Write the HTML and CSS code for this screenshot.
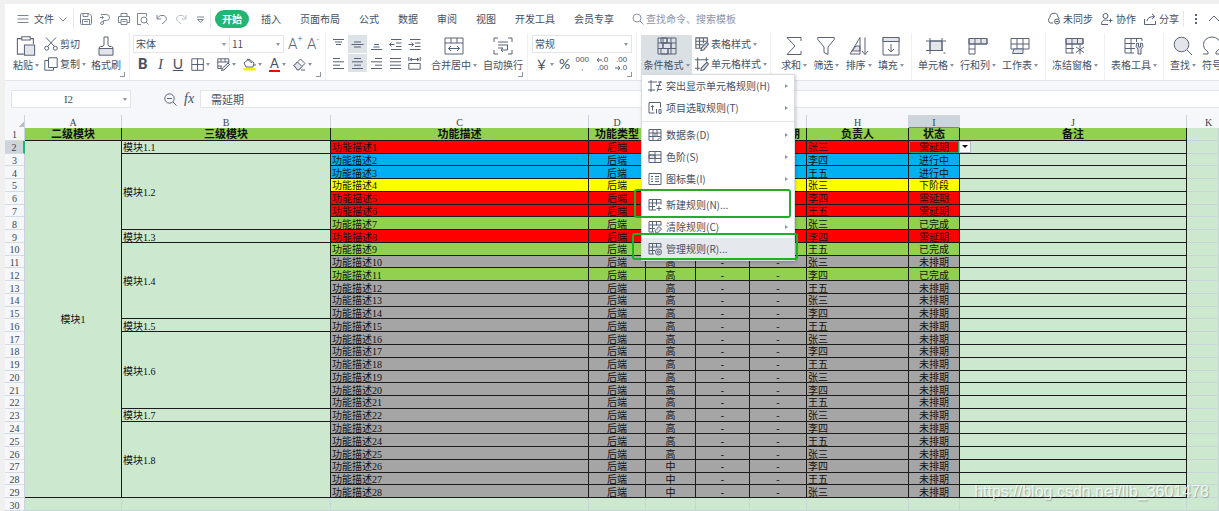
FILE: index.html
```html
<!DOCTYPE html>
<html lang="zh-CN">
<head>
<meta charset="utf-8">
<title>表格</title>
<link rel="stylesheet" href="styles.css">
</head>
<body>
<svg class="defs" aria-hidden="true">
  <symbol id="save" viewBox="0 0 12 12"><path d="M.5 1.5q0-1 1-1h7.500l2.500 2.500v7.500q0 1-1 1h-9q-1 0-1-1zM3 .5v3h5v-3M2.500 11.500v-5h7v5M4 8.500h4"/></symbol>
  <symbol id="export" viewBox="0 0 12 12"><path d="M2 1.500h5.500a3 3 0 0 1 0 6H4.500v2.500a1.500 1.500 0 0 1-3 0q0-1.500 3-1.500M4.500 4.500H1M4.500 4.500L2.800 3M4.500 4.500L2.800 6"/></symbol>
  <symbol id="print" viewBox="0 0 12 12"><path d="M3 3.500v-3h6v3M3 9.500H.5v-6h11v6H9M3 6.500h6v5H3zM4.500 8.500h3"/></symbol>
  <symbol id="preview" viewBox="0 0 12 12"><path d="M4 11.500H.5V.5h9v3M11.500 11.500L9 9"/><circle cx="7" cy="7" r="3"/></symbol>
  <symbol id="undo" viewBox="0 0 12 12"><path d="M1 2v4h4M1 5.500Q4 1 8 2.500Q12.500 5.500 9 8.500L6 11"/></symbol>
  <symbol id="redo" viewBox="0 0 12 12"><path d="M11 2v4H7M11 5.500Q8 1 4 2.500Q-.5 5.500 3 8.500L6 11"/></symbol>
  <symbol id="search" viewBox="0 0 12 12"><circle cx="5" cy="5" r="4"/><path d="M8 8l3.500 3.500"/></symbol>
  <symbol id="down" viewBox="0 0 8 8"><path d="M.5 2.500L4 6l3.500-3.500"/></symbol>
  <symbol id="cloud" viewBox="0 0 13 12"><path d="M6 10.500H3.500a3 3 0 0 1-.5-5.500a4 4 0 0 1 8-.5a2.500 2.500 0 0 1 1 2"/><circle cx="10" cy="9" r="2.500"/><path d="M8.500 9h3"/></symbol>
  <symbol id="person" viewBox="0 0 12 12"><circle cx="4.500" cy="3" r="2.500"/><path d="M7 11.500H.5Q.5 7 4.500 7q1.500 0 2.500.5M9.500 5.500v4M7.500 7.500h4"/></symbol>
  <symbol id="share" viewBox="0 0 12 12"><path d="M.5 6v5.500h11V8M3 8Q3.500 3.500 10.500 3.500M8 .8l2.800 2.700L8 6"/></symbol>

  <symbol id="paste" viewBox="0 0 18 19"><path d="M5 2.500H.8v14.700h6M13 2.500h3v5"/><path d="M5 .8h8v3H5z"/><path class="soft" d="M7.500 8.500h9.700v9.700H7.500z"/></symbol>
  <symbol id="cut" viewBox="0 0 14 14"><path d="M2 .5l8.500 9M12 .5L3.500 9.500"/><circle cx="2.700" cy="11.200" r="2"/><circle cx="11.300" cy="11.200" r="2"/></symbol>
  <symbol id="copy" viewBox="0 0 14 14"><path d="M4.500.8h8.700v9.700H4.500zM4.500 3.500H.8v9.700h8.700v-2.700"/></symbol>
  <symbol id="brush" viewBox="0 0 16 20"><path d="M6 1h4v7.500q0 2 2 2h1.500q1.500 0 1.500 2H1q0-2 1.500-2H4q2 0 2-2z"/><path class="soft" d="M1 12.500h14v6.700H1z"/></symbol>
  <symbol id="grid" viewBox="0 0 13 13"><path d="M.8.8h11.500v11.500H.8zM6.500.8v11.500M.8 6.500h11.500"/></symbol>
  <symbol id="gridpen" viewBox="0 0 13 13"><path d="M4.500 10.500H.8V.8h11v4.500M.8 4h11M4 .8v3M8 .8v3M1 8h4M4 8v3"/><path class="soft" d="M11 5l1.500 1.500L7 12l-2.500.5L5.500 10z"/></symbol>
  <symbol id="fill" viewBox="0 0 13 13"><path d="M1 5l5-4 5 4-1 4H3zM4 1l5 4M12 6v2"/><path class="yellow" d="M.5 10h12v2.500H.5z"/></symbol>
  <symbol id="eraser" viewBox="0 0 13 13"><path d="M1 7.500l6.500-6.500 4.500 4.500L5.500 12h-1z"/><path class="soft" d="M1 7.500l3.500-3.500L9 8.500 5.500 12h-1z"/><path d="M8 12h4"/></symbol>
  <symbol id="a-top" viewBox="0 0 13 13"><path d="M1 1.500h11M3 4h7M4 6.500h5"/></symbol>
  <symbol id="a-mid" viewBox="0 0 13 13"><path d="M3 4h7M.5 6.500h12M3 9h7"/></symbol>
  <symbol id="a-bot" viewBox="0 0 13 13"><path d="M4 6.500h5M3.500 9h6M1 11.500h11"/></symbol>
  <symbol id="outdent" viewBox="0 0 13 13"><path d="M2 1.500h10.500M7 5h5.500M7 8.500h5.500M2 11.500h10.500M5.500 6.500h-5M2.500 4.500l-2 2 2 2"/></symbol>
  <symbol id="indent" viewBox="0 0 13 13"><path d="M2 1.500h10.500M7 5h5.500M7 8.500h5.500M2 11.500h10.500M.5 6.500h5M3.500 4.500l2 2-2 2"/></symbol>
  <symbol id="a-left" viewBox="0 0 13 13"><path d="M1 1.500h7M1 4.800h11M1 8.200h7M1 11.500h11"/></symbol>
  <symbol id="a-center" viewBox="0 0 13 13"><path d="M3 1.500h7M1 4.800h11M3 8.200h7M1 11.500h11"/></symbol>
  <symbol id="a-right" viewBox="0 0 13 13"><path d="M5 1.500h7M1 4.800h11M5 8.200h7M1 11.500h11"/></symbol>
  <symbol id="a-just" viewBox="0 0 13 13"><path d="M1 1.500h11M1 4.800h11M1 8.200h11M1 11.500h11"/></symbol>
  <symbol id="a-dist" viewBox="0 0 13 13"><path d="M.8 0v4M12.200 0v4M2 2.500h9M4 1L2 2.500 4 4M9 1l2 1.500L9 4M.8 6.500h11.400v5.700H.8z"/></symbol>
  <symbol id="merge" viewBox="0 0 20 18"><path d="M1 1h18v16H1zM1 6h18M7 1v5M13 1v5M4.500 11.500h11M7 9l-2.500 2.500L7 14M13 9l2.500 2.500L13 14"/></symbol>
  <symbol id="wrap" viewBox="0 0 20 18"><path d="M5 1H1v4M15 1h4v4M5 17H1v-4M15 17h4v-4M5 5h10M5 8h10M5 11h5M14.500 8v5H8M10 11l-2 2 2 2"/></symbol>
  <symbol id="cond" viewBox="0 0 20 18"><path class="soft" d="M4 1h6v5H4zM6 6h8v5.500H6zM4 11.500h7V17H4z"/><path d="M1 1h18v16H1zM1 6h18M1 11.500h18M6 1v5M10 1v5M14 1v16M6 6v5.500M11 11.500V17"/></symbol>
  <symbol id="tstyle" viewBox="0 0 13 13"><path d="M6 10.500H.8V.8h10.700v4M.8 4h10M.8 7.200h7M4.200.8v9.700M7.800.8v5"/><path class="soft" d="M11 5l1.500 1.500L8 12l-2.500.5.5-2.500z"/></symbol>
  <symbol id="cstyle" viewBox="0 0 13 13"><path d="M0 2.500h12.500M2.500.5v12M0 10.500h5M10.500.5v4"/><path class="soft" d="M11 5l1.500 1.500L8 12l-2.500.5.5-2.500z"/></symbol>
  <symbol id="sum" viewBox="0 0 18 20"><path d="M16 5V1.500H2L10 10 2 18.500h14V15"/></symbol>
  <symbol id="filter" viewBox="0 0 18 20"><path d="M.8 1.500h16.400v2L11 11v7.500l-4-2V11L.8 3.500z"/></symbol>
  <symbol id="sort" viewBox="0 0 20 20"><path class="soft" d="M3 15l4-5h4v5z"/><path d="M1 18L11 1.500V18zM16 1.500v17M13 15l3 3.500 3-3.500"/></symbol>
  <symbol id="filldown" viewBox="0 0 18 20"><path d="M1 1.500h16v17.500H1z"/><path class="soft" d="M1 1.500h16v4H1z"/><path d="M9 8v8M6 13l3 3 3-3"/></symbol>
  <symbol id="cell" viewBox="0 0 20 18"><path class="soft" d="M4 4h12v9.500H4z"/><path d="M0 4h20M0 13.500h17M4 1v16M16 1v13M17.500 16h2"/></symbol>
  <symbol id="rowcol" viewBox="0 0 20 18"><path class="soft" d="M1 1.500h18V7H1z"/><path d="M1 1.500h6V17H1zM1 7h18V1.500M1 12h6M13 1.500V7"/></symbol>
  <symbol id="sheet" viewBox="0 0 20 18"><path d="M1 1.500h18V12H1zM1 7h18M7 1.500V12M13 1.500V12"/><path class="soft" d="M4 12h9v4.500H2.500z"/></symbol>
  <symbol id="freeze" viewBox="0 0 20 18"><path class="soft" d="M1 1.500h17V7H1z"/><path d="M9 16H1V1.500h17V7M1 7h17M1 11.500h8M7 1.500V16M12.500 1.500V7M15 8v9.500M11 10l8 5.500M19 10l-8 5.500"/></symbol>
  <symbol id="tools" viewBox="0 0 20 18"><path d="M10 16H1V1.500h17V4M1 6.500h10M1 11.500h10M7 1.500V16M12.500 1.500V5"/><path class="soft" d="M14 17v-5q-3-2-1.500-5.500L14.500 6v4h2V6l2 .5Q20 10 17 12v5z"/></symbol>
  <symbol id="find" viewBox="0 0 20 20"><circle class="soft" cx="8.500" cy="8.500" r="7.300"/><path d="M14 14l5 5"/></symbol>
  <symbol id="omega" viewBox="0 0 20 20"><path d="M1 18h5v-2Q1 13 1.500 8.500A8.500 7.500 0 0 1 18.500 8.500Q19 13 14 16v2h5"/></symbol>
  <symbol id="zoomout" viewBox="0 0 13 13"><circle cx="5.500" cy="5.500" r="4.700"/><path d="M9 9l3.500 3.500M3 5.500h5"/></symbol>
  <symbol id="arr-l" viewBox="0 0 6 6"><path d="M6 3H1M3 1L1 3l2 2"/></symbol>
  <symbol id="arr-r" viewBox="0 0 6 6"><path d="M0 3h5M3 1l2 2-2 2"/></symbol>

  <symbol id="m-hl" viewBox="0 0 14 13"><path d="M0 2.500h9M3 .5v12M0 10.500h7M8 6h5M10 10h4M12.500 1.500L9 12M10 2.500h4"/></symbol>
  <symbol id="m-top" viewBox="0 0 14 13"><path d="M6.500 11.500H1V1h11.500v5M4.500 9V4M3 5.500L4.500 4 6 5.500M8.500 7.500V12M11 8h2v4h-2z"/></symbol>
  <symbol id="m-bar" viewBox="0 0 14 13"><path d="M1 1h12v11H1zM1 4.500h12M1 8h12M5 1v11M9 1v7M7 4.500v3.500M9 12l3-3"/></symbol>
  <symbol id="m-scale" viewBox="0 0 14 13"><path class="soft" d="M1 4.500h6V8H1z"/><path d="M1 1h12v11H1zM1 4.500h12M1 8h12M7 1v11"/></symbol>
  <symbol id="m-icons" viewBox="0 0 14 13"><path d="M1 1h12v11H1zM3 4h2M3 6.500h2M3 9h2M7 4h4M7 6.500h4M7 9h4"/></symbol>
  <symbol id="m-new" viewBox="0 0 14 13"><path d="M8 11.500H1V1h12v5M1 4.500h12M4.500 1v10.500M1 8h6M8.500 1v6M11 7.500v5M8.500 10h5"/></symbol>
  <symbol id="m-clear" viewBox="0 0 14 13"><path d="M6 11.500H1V1h12v4M1 4.500h12M4.500 1v10.500M1 8h6M8.500 1v4"/><path class="soft" d="M7 10l4-4 2.500 2.500-4 4H8z"/></symbol>
  <symbol id="m-manage" viewBox="0 0 14 13"><path d="M6 11.500H1V1h12v4M1 4.500h12M4.500 1v10.500M1 8h6M8.500 1v4"/><circle class="soft" cx="10.500" cy="9.500" r="3"/><circle cx="10.500" cy="9.500" r="1"/></symbol>
</svg>

<div class="app">
  <header class="tabs">
    <button class="file"><svg class="i12" viewBox="0 0 12 12"><path d="M.5 2.500h11M.5 6h11M.5 9.500h11"/></svg><span>文件</span><svg class="i8"><use href="#down"/></svg></button>
    <div class="quick">
      <button aria-label="保存"><svg class="i12"><use href="#save"/></svg></button>
      <button aria-label="输出"><svg class="i12"><use href="#export"/></svg></button>
      <button aria-label="打印"><svg class="i12"><use href="#print"/></svg></button>
      <button aria-label="预览"><svg class="i12"><use href="#preview"/></svg></button>
      <button aria-label="撤销"><svg class="i12"><use href="#undo"/></svg></button>
      <button aria-label="恢复" class="faded"><svg class="i12"><use href="#redo"/></svg></button>
      <button aria-label="更多"><svg class="i12" viewBox="0 0 12 12"><path d="M3 4h7M3.500 6.500h6L6.500 9z"/></svg></button>
    </div>
    <nav class="nav">
      <a class="on" href="#start">开始</a><a href="#insert">插入</a><a href="#layout">页面布局</a><a href="#formula">公式</a><a href="#data">数据</a><a href="#review">审阅</a><a href="#view">视图</a><a href="#dev">开发工具</a><a href="#vip">会员专享</a>
    </nav>
    <label class="search"><svg class="i12"><use href="#search"/></svg><input type="text" aria-label="查找" placeholder="查找命令、搜索模板"></label>
    <div class="account">
      <button><svg class="i13"><use href="#cloud"/></svg>未同步</button>
      <button><svg class="i12"><use href="#person"/></svg>协作</button>
      <button><svg class="i12"><use href="#share"/></svg>分享</button>
    </div>
    <button class="dots" aria-label="更多选项"><svg class="i12" viewBox="0 0 12 12"><path d="M6 1v2M6 5v2M6 9v2"/></svg></button>
    <button class="fold" aria-label="收起"><svg class="i12" viewBox="0 0 12 12"><path d="M1 8l5-5 5 5"/></svg></button>
  </header>

  <section class="ribbon">
    <div class="group clip corner">
      <button class="big"><svg class="i20"><use href="#paste"/></svg><span class="drop">粘贴</span></button>
      <div class="stack">
        <button class="small"><svg class="i14"><use href="#cut"/></svg>剪切</button>
        <button class="small"><svg class="i14"><use href="#copy"/></svg><span class="drop">复制</span></button>
      </div>
      <button class="big"><svg class="i20"><use href="#brush"/></svg><span>格式刷</span></button>
    </div>
    <div class="group font corner">
      <div class="stack">
        <div class="line">
          <label class="pick face"><select aria-label="字体"><option>宋体</option></select></label>
          <label class="pick size"><select aria-label="字号"><option>11</option></select></label>
          <button class="letter" aria-label="增大字号">A<sup>+</sup></button>
          <button class="letter" aria-label="减小字号">A<sup>-</sup></button>
        </div>
        <div class="line marks">
          <button class="bold">B</button><button class="ital">I</button><button class="under">U</button>
          <button class="drop" aria-label="边框"><svg class="i13"><use href="#grid"/></svg></button>
          <button class="drop" aria-label="绘图边框"><svg class="i13"><use href="#gridpen"/></svg></button>
          <button class="drop" aria-label="填充颜色"><svg class="i13"><use href="#fill"/></svg></button>
          <button class="drop" aria-label="字体颜色"><span class="ink">A</span></button>
          <button class="drop" aria-label="清除"><svg class="i13"><use href="#eraser"/></svg></button>
        </div>
      </div>
    </div>
    <div class="group align corner">
      <div class="pad">
        <button aria-label="顶端对齐"><svg class="i13"><use href="#a-top"/></svg></button>
        <button class="on" aria-label="垂直居中"><svg class="i13"><use href="#a-mid"/></svg></button>
        <button aria-label="底端对齐"><svg class="i13"><use href="#a-bot"/></svg></button>
        <button aria-label="减少缩进"><svg class="i13"><use href="#outdent"/></svg></button>
        <button aria-label="增加缩进"><svg class="i13"><use href="#indent"/></svg></button>
        <button aria-label="左对齐"><svg class="i13"><use href="#a-left"/></svg></button>
        <button class="on" aria-label="居中"><svg class="i13"><use href="#a-center"/></svg></button>
        <button aria-label="右对齐"><svg class="i13"><use href="#a-right"/></svg></button>
        <button aria-label="两端对齐"><svg class="i13"><use href="#a-just"/></svg></button>
        <button aria-label="分散对齐"><svg class="i13"><use href="#a-dist"/></svg></button>
      </div>
      <button class="big"><svg class="i20"><use href="#merge"/></svg><span class="drop">合并居中</span></button>
      <button class="big"><svg class="i20"><use href="#wrap"/></svg><span>自动换行</span></button>
    </div>
    <div class="group number corner">
      <div class="stack">
        <label class="pick"><select aria-label="数字格式"><option>常规</option></select></label>
        <div class="line formats">
          <button class="drop yen" aria-label="货币">￥</button><button class="pct">%</button>
          <button class="dec mid"><span>000</span><span>,</span></button>
          <button class="dec"><span><svg class="i6"><use href="#arr-l"/></svg>.0</span><span>.00</span></button>
          <button class="dec"><span>.00</span><span><svg class="i6"><use href="#arr-r"/></svg>.0</span></button>
        </div>
      </div>
    </div>
    <div class="group styles">
      <div class="menuhost">
        <button class="big on"><svg class="i20"><use href="#cond"/></svg><span class="drop">条件格式</span></button>
        <div class="menu" role="menu">
          <button class="sub" role="menuitem"><svg class="i14"><use href="#m-hl"/></svg>突出显示单元格规则(H)</button>
          <button class="sub" role="menuitem"><svg class="i14"><use href="#m-top"/></svg>项目选取规则(T)</button>
          <hr>
          <button class="sub" role="menuitem"><svg class="i14"><use href="#m-bar"/></svg>数据条(D)</button>
          <button class="sub" role="menuitem"><svg class="i14"><use href="#m-scale"/></svg>色阶(S)</button>
          <button class="sub" role="menuitem"><svg class="i14"><use href="#m-icons"/></svg>图标集(I)</button>
          <hr class="slim">
          <button class="marked first" role="menuitem"><svg class="i14"><use href="#m-new"/></svg>新建规则(N)...</button>
          <button class="sub" role="menuitem"><svg class="i14"><use href="#m-clear"/></svg>清除规则(C)</button>
          <button class="marked second" role="menuitem"><svg class="i14"><use href="#m-manage"/></svg>管理规则(R)...</button>
        </div>
      </div>
      <div class="stack">
        <button class="small"><svg class="i14"><use href="#tstyle"/></svg><span class="drop">表格样式</span></button>
        <button class="small"><svg class="i14"><use href="#cstyle"/></svg><span class="drop">单元格样式</span></button>
      </div>
    </div>
    <div class="group edit">
      <button class="big"><svg class="i20"><use href="#sum"/></svg><span class="drop">求和</span></button>
      <button class="big"><svg class="i20"><use href="#filter"/></svg><span class="drop">筛选</span></button>
      <button class="big"><svg class="i20"><use href="#sort"/></svg><span class="drop">排序</span></button>
      <button class="big"><svg class="i20"><use href="#filldown"/></svg><span class="drop">填充</span></button>
    </div>
    <div class="group cells">
      <button class="big"><svg class="i20"><use href="#cell"/></svg><span class="drop">单元格</span></button>
      <button class="big"><svg class="i20"><use href="#rowcol"/></svg><span class="drop">行和列</span></button>
      <button class="big"><svg class="i20"><use href="#sheet"/></svg><span class="drop">工作表</span></button>
    </div>
    <div class="group single"><button class="big"><svg class="i20"><use href="#freeze"/></svg><span class="drop">冻结窗格</span></button></div>
    <div class="group single"><button class="big"><svg class="i20"><use href="#tools"/></svg><span class="drop">表格工具</span></button></div>
    <div class="group last">
      <button class="big"><svg class="i20"><use href="#find"/></svg><span class="drop">查找</span></button>
      <button class="big"><svg class="i20"><use href="#omega"/></svg><span>符号</span></button>
    </div>
  </section>

  <section class="formula">
    <label class="pick name"><input type="text" aria-label="名称框" value="I2"></label>
    <button class="lens" aria-label="缩小"><svg class="i13"><use href="#zoomout"/></svg></button>
    <button class="fx">fx</button>
    <input class="value" type="text" aria-label="编辑栏" value="需延期">
  </section>

  <main class="sheet">
    <table>
      <colgroup><col class="c-n"><col class="c-a"><col class="c-b"><col class="c-c"><col class="c-d"><col class="c-e"><col class="c-f"><col class="c-g"><col class="c-h"><col class="c-i"><col class="c-j"><col class="c-k"></colgroup>
      <thead><tr><th class="all"></th><th>A</th><th>B</th><th>C</th><th>D</th><th>E</th><th>F</th><th>G</th><th>H</th><th class="cur">I</th><th>J</th><th class="k">K</th></tr></thead>
      <tbody id="rows">
        <tr class="title"><th>1</th><td>二级模块</td><td>三级模块</td><td>功能描述</td><td>功能类型</td><td>优先级</td><td>开始日期</td><td>结束日期</td><td>负责人</td><td>状态</td><td>备注</td><td class="out"></td></tr>
      </tbody>
    </table>
  </main>
  <div class="watermark">https://blog.csdn.net/llb_3601478</div>
</div>
<script src="rows.js"></script>
</body>
</html>
```
FILE: rows.js
```js
const body = document.getElementById('rows');
const names = ['张三', '李四', '王五'];
const states = { red: '需延期', blue: '进行中', yellow: '下阶段', green: '已完成', grey: '未排期' };
const tones = ['red', 'blue', 'blue', 'yellow', 'red', 'red', 'green', 'red', 'green', 'grey', 'green'];
// First sheet row of each third-level module and how many rows it spans.
const modules = { 2: 1, 3: 6, 9: 1, 10: 6, 16: 1, 17: 6, 23: 1, 24: 6 };
let moduleNo = 0;

function cell(tr, text, cls, span) {
  const td = tr.insertCell();
  td.textContent = text;
  if (cls) td.className = cls;
  if (span) td.rowSpan = span;
  return td;
}

function rowHead(tr, n) {
  const th = document.createElement('th');
  th.textContent = n;
  tr.append(th);
}

for (let r = 2; r <= 29; r++) {
  const tr = body.insertRow();
  const tone = tones[r - 2] || 'grey';
  tr.className = tone;
  rowHead(tr, r);
  if (r === 2) {
    tr.classList.add('cur');
    cell(tr, '模块1', 'mid', 28);
  }
  if (modules[r]) cell(tr, '模块1.' + (++moduleNo), 'left', modules[r]);
  cell(tr, '功能描述' + (r - 1), 'left tone');
  cell(tr, '后端', 'tone');
  cell(tr, r < 27 ? '高' : '中', 'tone');
  cell(tr, '-', 'tone');
  cell(tr, '-', 'tone');
  cell(tr, names[(r - 2) % 3], 'left tone');
  const state = cell(tr, states[tone], 'tone');
  if (r === 2) {
    state.classList.add('active');
    const pick = document.createElement('button');
    pick.className = 'cellpick';
    pick.setAttribute('aria-label', '选择状态');
    state.append(pick);
  }
  cell(tr, '');
  cell(tr, '', 'out');
}

const last = body.insertRow();
last.className = 'empty';
rowHead(last, 30);
for (let c = 0; c < 11; c++) cell(last, '', 'out');
```
FILE: styles.css
```css
* { box-sizing: border-box; }

body {
  margin: 0;
  height: 100vh;
  overflow: hidden;
  background: #f0f0f0;
  padding: 4px 0 0 5px;
  font: 10px/14px "Noto Sans CJK SC", sans-serif;
  color: #465064;
}

button, input, select {
  font: inherit;
  color: inherit;
  border: 0;
  padding: 0;
  margin: 0;
  background: none;
}

button { display: flex; align-items: center; white-space: nowrap; }
a { color: inherit; text-decoration: none; }

svg {
  flex: none;
  fill: none;
  stroke: #596377;
  stroke-width: 1;
}

.defs { position: absolute; width: 0; height: 0; }
.soft { fill: #e3e5ea; }
.yellow { fill: #f2ee00; stroke: none; }
.i6 { width: 6px; height: 6px; }
.i8 { width: 8px; height: 8px; }
.i12 { width: 12px; height: 12px; }
.i13 { width: 13px; height: 13px; }
.i14 { width: 14px; height: 14px; }
.i20 { width: 20px; height: 20px; }

.app { height: 100%; display: flex; flex-direction: column; background: #f5f7fa; }

/* Tab bar */
.tabs {
  flex: none;
  height: 29px;
  display: flex;
  align-items: center;
  background: #fff;
  padding-left: 12px;
  overflow: hidden;
}
.file { gap: 5px; height: 20px; padding-right: 6px; border-right: 1px solid #e6e8ec; }
.file svg, .quick svg { stroke: #7a8496; }
.quick { display: flex; gap: 6px; padding: 0 3px 0 6px; height: 20px; border-right: 1px solid #e6e8ec; }
.quick .faded { opacity: .5; }
.quick button { width: 13px; }
.nav { display: flex; align-items: center; gap: 19px; margin-left: 4px; white-space: nowrap; }
.nav .on {
  background: #22b573;
  color: #fff;
  font-weight: 700;
  border-radius: 9px;
  line-height: 18px;
  padding: 0 7px;
  margin-right: -7px;
}
.search { display: flex; align-items: center; gap: 2px; margin-left: 18px; }
.search svg { stroke: #8c95a5; }
.search input { width: 100px; }
.search input::placeholder { color: #8b94a8; opacity: 1; }
.account { display: flex; gap: 8px; margin-left: auto; padding-right: 4px; height: 16px; border-right: 1px solid #e6e8ec; }
.account button { gap: 3px; }
.dots { padding: 0 6px; }
.dots svg { stroke-width: 2; }
.fold { width: 11px; overflow: hidden; }

/* Ribbon */
.ribbon {
  flex: none;
  display: flex;
  height: 48px;
  background: #fff;
  border-bottom: 1px solid #e2e5e9;
  position: relative;
  z-index: 2;
}
.group { flex: none; display: flex; align-items: flex-start; padding-top: 2px; position: relative; border-right: 1px solid #eff0f3; }
.group.corner::after {
  content: "";
  position: absolute;
  right: 4px;
  bottom: 3px;
  width: 4px;
  height: 4px;
  border-right: 1px solid #8d95a3;
  border-bottom: 1px solid #8d95a3;
}
.big { flex-direction: column; align-items: center; gap: 2px; height: 40px; padding-top: 1px; }
.big.on { background: #dbe0e5; width: 51px; }
.stack { display: flex; flex-direction: column; gap: 2px; }
.line { display: flex; align-items: center; height: 18px; }
.small { height: 18px; gap: 2px; }

.drop { display: flex; align-items: center; gap: 2px; }
.drop::after, .pick::after {
  content: "";
  flex: none;
  border: 2px solid transparent;
  border-top: 3px solid #8a93a5;
  border-bottom: 0;
}
.pick {
  display: flex;
  align-items: center;
  height: 18px;
  border: 1px solid #e3e5e9;
  background: #fff;
  padding: 0 3px 0 2px;
}
.pick select, .pick input { flex: 1; min-width: 0; appearance: none; outline: 0; }

.clip { width: 125px; padding-left: 8px; gap: 5px; }
.font { width: 196px; padding-left: 3px; }
.face { width: 97px; }
.size { width: 55px; margin-left: -1px; }
.letter { font: 15px/18px Roboto, sans-serif; font-weight: 300; color: #596377; margin-left: 4px; align-items: flex-start; width: 15px; }
.letter sup { font-size: 9px; line-height: 8px; vertical-align: top; }
.marks { gap: 7px; padding-left: 5px; }
.marks > button { color: #445063; height: 18px; }
.bold { font: 700 15px/18px Roboto, sans-serif; width: 11px; }
.ital { font: italic 15px/18px "Liberation Serif", serif; width: 9px; justify-content: center; }
.under { font: 14px/16px Lato, sans-serif; text-decoration: underline; width: 12px; justify-content: center; }
.ink { font: 13px/13px Lato, sans-serif; border-bottom: 2px solid #f00; padding: 0 1px; }

.align { width: 202px; padding-left: 3px; }
.pad { display: grid; grid-template-columns: repeat(5, 19px); row-gap: 1px; }
.pad button { height: 18px; justify-content: center; }
.pad .on { background: #dde2e7; }
.align .pad + .big { margin: 0 6px 0 7px; }

.number { width: 109px; padding-left: 4px; }
.number .pick { width: 100px; }
.formats { gap: 5px; padding-left: 3px; color: #445063; }
.yen { font-size: 13px; }
.pct { font: 14px/18px Lato, sans-serif; }
.dec { flex-direction: column; align-items: flex-end; font: 8px/8px "Liberation Sans", sans-serif; width: 14px; }
.dec span { display: flex; align-items: center; }
.dec.mid { align-items: center; }

.styles { width: 134px; padding-left: 4px; gap: 3px; }
.menuhost { position: relative; }
.edit { width: 141px; padding: 2px 4px 0 7px; }
.cells { width: 134px; padding: 2px 4px 0 3px; }
.edit .big, .cells .big { flex: 1; }
.single { width: 59px; justify-content: center; }
.last { flex: 1 1 0; overflow: hidden; padding-left: 6px; gap: 6px; border: 0; }
.last .big { flex: none; }

/* Conditional format menu */
.menu {
  position: absolute;
  top: 39px;
  left: 0;
  width: 154px;
  background: #fff;
  border: 1px solid #d8dbe0;
  box-shadow: 1px 1px 3px rgba(0, 0, 0, .2);
}
.menu button { position: relative; width: 100%; height: 22px; gap: 4px; padding: 0 6px; }
.menu .sub::after {
  content: "";
  margin-left: auto;
  border: 2px solid transparent;
  border-left: 3px solid #8a93a5;
  border-right: 0;
}
.menu hr { margin: 2px 0; border: 0; border-top: 1px solid #e3e5e9; }
.menu hr.slim { border-color: transparent; margin: 2px 0 1px; }
.menu .marked::before {
  content: "";
  position: absolute;
  z-index: 1;
  border: 2px solid #22ae26;
  border-radius: 3px;
  top: -5px;
  bottom: -2px;
  left: -8px;
  right: 3px;
}
.menu .second { background: #e5e8ed; }
.menu .second::before { left: -10px; right: -4px; bottom: 0; }

/* Formula bar */
.formula { flex: none; display: flex; align-items: center; height: 34px; padding: 2px 0 0 6px; }
.formula .name { width: 120px; }
.name input { text-align: center; font: 11px/16px "Liberation Serif", serif; }
.lens { margin-left: 33px; }
.fx { margin: 0 6px 0 7px; font: italic 14px/18px "Liberation Serif", serif; }
.value {
  flex: 1;
  min-width: 0;
  height: 18px;
  background: #fff;
  border: 1px solid #e3e5e9;
  border-right: 0;
  padding-left: 10px;
  font-size: 11px;
}

/* Sheet */
.sheet { flex: 1; min-height: 0; }
table {
  width: 100%;
  height: 100%;
  table-layout: fixed;
  border-collapse: separate;
  border-spacing: 0;
  font: 10px/9px "Liberation Serif", "Noto Sans CJK SC", serif;
  color: #111;
}
.c-n { width: 20px; }
.c-a { width: 97px; }
.c-b { width: 209px; }
.c-c { width: 258px; }
.c-d { width: 57px; }
.c-e { width: 50px; }
.c-f { width: 54px; }
.c-g { width: 57px; }
.c-h { width: 102px; }
.c-i { width: 51px; }
.c-k { width: 32px; }

th { font-weight: 400; padding: 2px 0 0; color: #3d4450; background: #f5f7fa; }
thead th { height: 13px; border-right: 1px solid #ccd2de; }
thead .cur { background: #cfd3dc; border-bottom: 1px solid #22b573; }
thead .k { padding-left: 11px; border-right: 0; }
thead .all { background: linear-gradient(135deg, transparent 65%, #b8bdc6 65%); background-size: 8px 8px; background-repeat: no-repeat; background-position: 11px 4px; }
tbody th { border-bottom: 1px solid #d5dae3; border-right: 1px solid #ccd2de; }
.cur th { background: #cfd3dc; border-right: 2px solid #22b573; }

td {
  padding: 2px 0 0;
  text-align: center;
  white-space: nowrap;
  background: #cce8cf;
  border-right: 1px solid #1c1c1c;
  border-bottom: 1px solid #1c1c1c;
}
.left { text-align: left; padding-left: 1px; }
.out { border-color: #c5d5d9; }
.title td { background: #92d050; font-weight: 700; font-size: 11px; }
.title .out { background: #cce8cf; }
.red .tone { background: #f00; }
.blue .tone { background: #00b0f0; }
.yellow .tone { background: #ff0; }
.green .tone { background: #92d050; }
.grey .tone { background: #a5a5a5; }

.active { position: relative; box-shadow: inset 0 0 0 1px #22a565; }
.cellpick {
  position: absolute;
  left: 100%;
  top: 0;
  width: 12px;
  height: 12px;
  justify-content: center;
  background: #fff;
  border: 1px solid #b8bcc8;
}
.cellpick::after { content: ""; border: 3px solid transparent; border-top-color: #111; border-bottom: 0; }

.watermark {
  position: absolute;
  right: 10px;
  bottom: 9px;
  font: 16px/20px "Liberation Sans", sans-serif;
  color: rgba(255, 255, 255, .8);
  text-shadow: 1px 1px 1px rgba(0, 0, 0, .25);
}
```
